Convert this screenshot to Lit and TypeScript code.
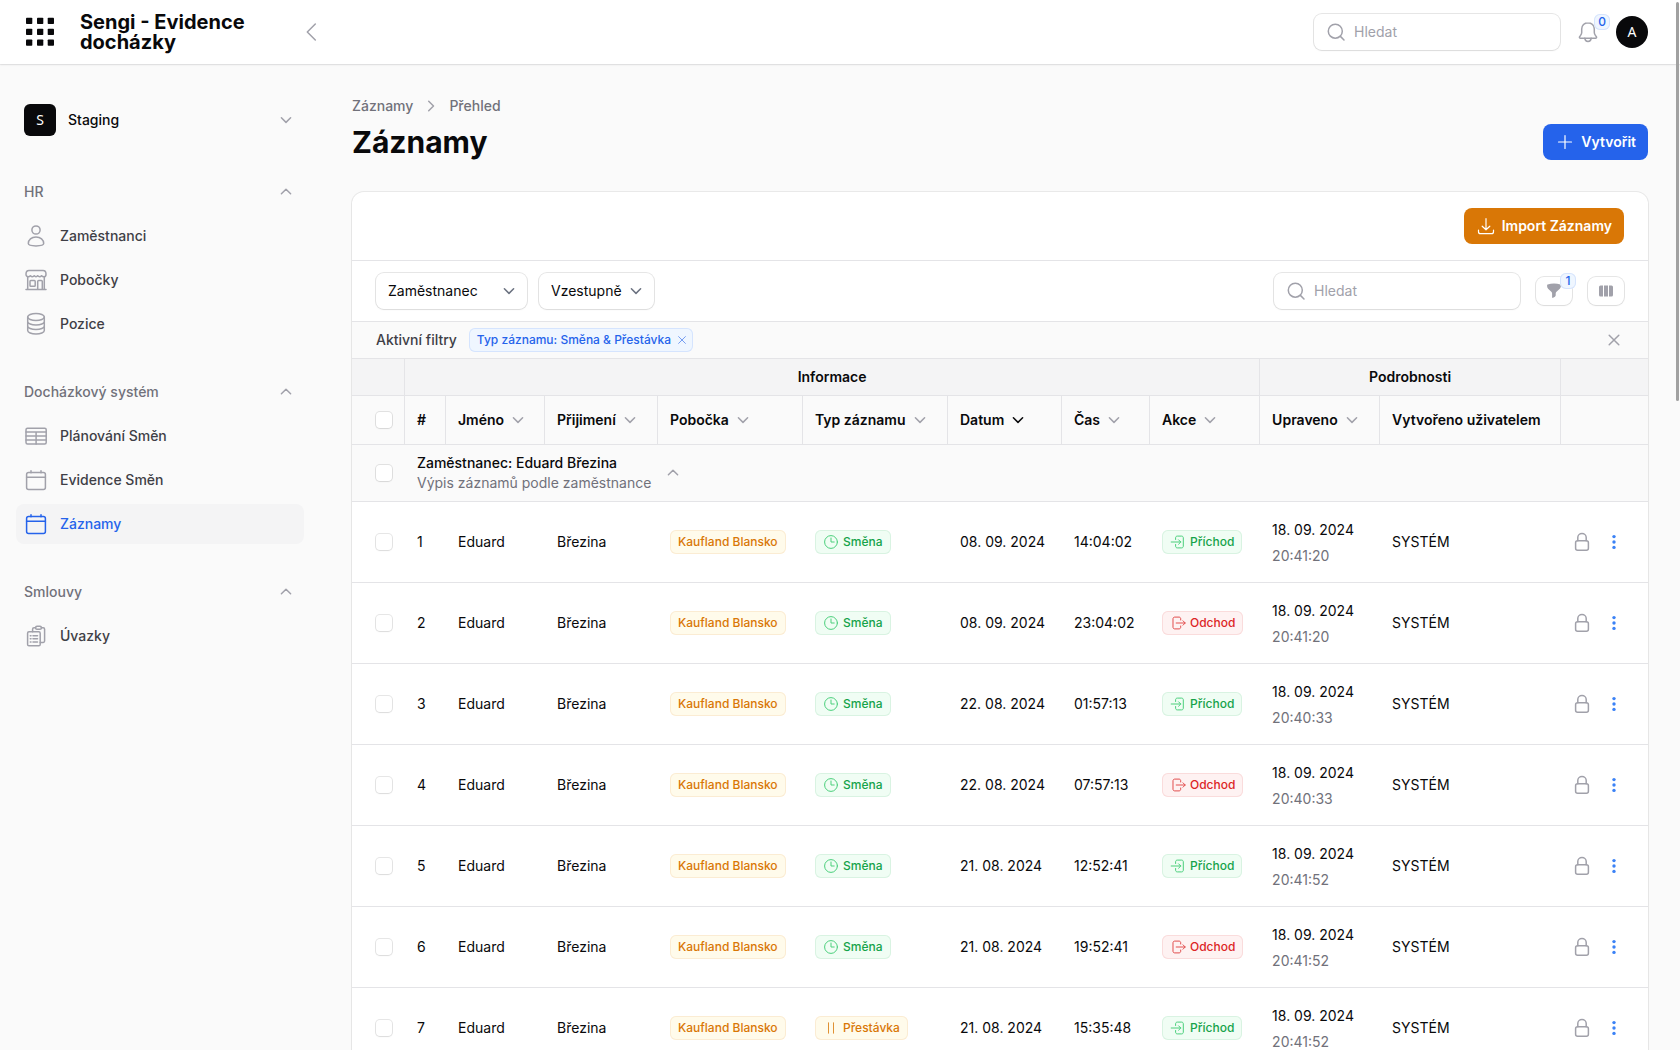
import { LitElement, html, svg, css, nothing, type SVGTemplateResult } from "lit";
import { customElement } from "lit/decorators.js";
import { classMap } from "lit/directives/class-map.js";

type IconDef = { box: number; art: SVGTemplateResult };

const calendar = svg`<rect x="2.6" y="4.6" width="18.8" height="16.8" rx="2"/><path d="M2.6 9.3h18.8M7 2.7v2M17 2.7v2"/>`;

const icons: Record<string, IconDef> = {
  apps: {
    box: 32,
    art: svg`${[2, 13, 23.7].map((y) => [2, 13, 23.7].map((x) => svg`<rect x=${x} y=${y - 0.2} width="6.3" height="6.3" rx="0.8" fill="currentColor" stroke="none"/>`))}`,
  },
  back: { box: 20, art: svg`<path d="M14.3 2 6.3 10l8 8"/>` },
  down: { box: 20, art: svg`<path d="m5.4 7.8 4.6 4.6 4.6-4.6"/>` },
  up: { box: 20, art: svg`<path d="M5.4 11.8 10 7.2l4.6 4.6"/>` },
  right: { box: 20, art: svg`<path d="m7.7 5.2 4.8 4.8-4.8 4.8"/>` },
  person: { box: 24, art: svg`<circle cx="12" cy="6" r="4.1"/><path d="M12 13c-4.500 0-7.700 2.800-7.700 6.600 0 1.600 3.400 2.300 7.700 2.300s7.700-.7 7.700-2.300c0-3.800-3.200-6.600-7.700-6.600z"/>` },
  store: { box: 24, art: svg`<path d="M5 2.600h14c1.800 0 3 1.600 3 3.600 0 1.600-.8 2.600-2.200 2.600-1 0-1.700-.5-2.200-1.100-.5.6-1.200 1.100-2 1.100s-1.500-.5-1.900-1.100c-.4.6-1 1.100-1.700 1.100s-1.300-.5-1.700-1.100c-.4.6-1.100 1.100-1.900 1.100s-1.500-.5-2-1.100c-.5.6-1.200 1.100-2.200 1.100C2.800 8.800 2 7.800 2 6.200c0-2 1.200-3.600 3-3.600z"/><path d="M3.700 9v12.500M20.300 9v12.500M2 21.500h20M13.700 21.500V13.600c0-.6.4-1 1-1h2.600c.6 0 1 .4 1 1v7.900"/><rect x="6" y="12.600" width="5.200" height="5.600" rx=".8"/>` },
  stack: { box: 24, art: svg`<ellipse cx="12" cy="5" rx="8.300" ry="3.500"/><path d="M3.700 5v13.400c0 2 3.700 3.600 8.300 3.600s8.300-1.600 8.300-3.600V5M3.700 9.400c0 2 3.700 3.600 8.300 3.600s8.300-1.600 8.300-3.600M3.700 13.900c0 2 3.700 3.600 8.300 3.600s8.300-1.600 8.300-3.600"/>` },
  table: { box: 24, art: svg`<rect x="2" y="4.200" width="20.200" height="15.800" rx="1.500"/><path d="M2 7.900h20.200M2 11.900h20.200M2 15.900h20.200M12.100 7.900V20"/>` },
  calendar: { box: 24, art: calendar },
  clipboard: { box: 24, art: svg`<rect x="3.600" y="7.800" width="12.600" height="14" rx="1.400"/><path d="M8.600 7.800V5.200c0-.8.6-1.400 1.400-1.400h1.600M17.400 3.800h1.800c.8 0 1.400.6 1.400 1.400V17c0 .8-.6 1.400-1.400 1.400h-3"/><rect x="11.600" y="2.300" width="5.800" height="3" rx="1.400"/><path d="M6.300 11.700h.7M9 11.700h4.500M6.300 14.800h.7M9 14.800h4.500M6.300 17.900h.7M9 17.900h4.500"/>` },
  search: { box: 20, art: svg`<circle cx="9.300" cy="9.200" r="7"/><path d="m14.400 14.400 3.600 3.600"/>` },
  bell: { box: 24, art: svg`<path d="M12 2.700c-3.600 0-6.300 2.600-6.300 6.200v3.600c0 1-.4 1.900-1.100 2.900l-1 1.300c-.5.7 0 1.500.8 1.500h15.200c.8 0 1.300-.8.8-1.500l-1-1.300c-.7-1-1.100-1.900-1.100-2.900V8.900c0-3.600-2.700-6.200-6.300-6.200z"/><path d="M8.800 18.200c.2 1.900 1.500 3.200 3.200 3.200s3-1.300 3.200-3.200"/>` },
  plus: { box: 20, art: svg`<path d="M10 3.500v13M3.500 10h13"/>` },
  download: { box: 20, art: svg`<path d="M2.500 14v1.700c0 1.200.8 2 2 2h11c1.200 0 2-.8 2-2V14M10 2.700v11M6.200 10.200 10 13.800l3.800-3.600"/>` },
  funnel: { box: 20, art: svg`<path d="M3.600 3.500c2-.6 4.200-.9 6.400-.9s4.400.3 6.400.9c.3.100.5.400.5.800v1c0 1-.4 1.800-1.100 2.500l-3.300 3c-.5.5-.8 1.100-.8 1.800v1.700c0 .6-.3 1.100-.8 1.400l-1.800 1.100c-.5.3-1 0-1-.6v-3.600c0-.7-.3-1.300-.8-1.800l-3.200-3C3.400 7.100 3.100 6.300 3.100 5.300v-1c0-.4.2-.7.5-.8z" fill="currentColor" stroke="none"/>` },
  columns: { box: 20, art: svg`<path d="M4.500 4.500H7v11H4.500a1.500 1.500 0 0 1-1.500-1.500V6a1.500 1.500 0 0 1 1.500-1.500zM8 4.500h4v11H8zM13 4.500h2.500A1.500 1.500 0 0 1 17 6v8a1.500 1.500 0 0 1-1.500 1.500H13z" fill="currentColor" stroke="none"/>` },
  close: { box: 20, art: svg`<path d="m5.200 5.200 9.600 9.600M14.800 5.200l-9.600 9.600"/>` },
  remove: { box: 14, art: svg`<path d="m3.600 3.600 6.800 6.800M10.400 3.600l-6.800 6.800"/>` },
  clock: { box: 16, art: svg`<circle cx="8" cy="8" r="6.400"/><path d="M8 4v4h3.200"/>` },
  pause: { box: 16, art: svg`<path d="M5.500 2.800v10.400M10.500 2.800v10.400"/>` },
  enter: { box: 16, art: svg`<path d="M5.600 5.500V3.800c0-1 .7-1.700 1.700-1.700h4.300c1 0 1.700.7 1.700 1.700v8.400c0 1-.7 1.700-1.700 1.700H7.300c-1 0-1.700-.7-1.700-1.700v-1.700M1.200 8h9.600M8.600 5.800 10.800 8l-2.200 2.200"/>` },
  leave: { box: 16, art: svg`<path d="M10.700 5V3.800c0-1-.7-1.700-1.700-1.700H4.700c-1 0-1.700.7-1.700 1.700v8.400c0 1 .7 1.700 1.700 1.700H9c1 0 1.700-.7 1.700-1.700V11M6.200 8h9M13 5.800 15.200 8 13 10.200"/>` },
  lock: { box: 20, art: svg`<rect x="3.600" y="8.800" width="12.800" height="9.400" rx="2"/><path d="M5.800 8.800V5.500C5.800 3.300 7.600 1.500 10 1.500s4.200 1.800 4.200 4v3.300"/>` },
  dots: { box: 20, art: svg`${[4.6, 10, 15.400].map((y) => svg`<circle cx="10" cy=${y} r="1.700" fill="currentColor" stroke="none"/>`)}` },
};

const icon = (name: string, extra = "") => {
  const { box, art } = icons[name];
  return html`<svg class="icon ${extra}" width=${box} height=${box} viewBox="0 0 ${box} ${box}" aria-hidden="true">${art}</svg>`;
};

const navigation = [
  { label: "HR", items: [["person", "Zaměstnanci"], ["store", "Pobočky"], ["stack", "Pozice"]] },
  { label: "Docházkový systém", items: [["table", "Plánování Směn"], ["calendar", "Evidence Směn"], ["calendar", "Záznamy"]] },
  { label: "Smlouvy", items: [["clipboard", "Úvazky"]] },
];
const currentPage = "Záznamy";

const columns = [
  { label: "#" },
  { label: "Jméno", sortable: true },
  { label: "Přijimení", sortable: true },
  { label: "Pobočka", sortable: true },
  { label: "Typ záznamu", sortable: true },
  { label: "Datum", sortable: true, sorted: true },
  { label: "Čas", sortable: true },
  { label: "Akce", sortable: true },
  { label: "Upraveno", sortable: true },
  { label: "Vytvořeno uživatelem" },
];

type Entry = { kind: string; date: string; time: string; action: string; edited: string };
const entries: Entry[] = [
  { kind: "Směna", date: "08. 09. 2024", time: "14:04:02", action: "Příchod", edited: "20:41:20" },
  { kind: "Směna", date: "08. 09. 2024", time: "23:04:02", action: "Odchod", edited: "20:41:20" },
  { kind: "Směna", date: "22. 08. 2024", time: "01:57:13", action: "Příchod", edited: "20:40:33" },
  { kind: "Směna", date: "22. 08. 2024", time: "07:57:13", action: "Odchod", edited: "20:40:33" },
  { kind: "Směna", date: "21. 08. 2024", time: "12:52:41", action: "Příchod", edited: "20:41:52" },
  { kind: "Směna", date: "21. 08. 2024", time: "19:52:41", action: "Odchod", edited: "20:41:52" },
  { kind: "Přestávka", date: "21. 08. 2024", time: "15:35:48", action: "Příchod", edited: "20:41:52" },
];

const badgeLook: Record<string, { tone: string; icon?: string }> = {
  "Kaufland Blansko": { tone: "amber" },
  Směna: { tone: "green", icon: "clock" },
  Přestávka: { tone: "amber", icon: "pause" },
  Příchod: { tone: "green", icon: "enter" },
  Odchod: { tone: "red", icon: "leave" },
};

const badge = (text: string) => {
  const look = badgeLook[text];
  return html`<span class="badge ${look.tone}">${look.icon ? icon(look.icon) : nothing}${text}</span>`;
};

const searchBox = () => html`
  <label class="search field">${icon("search")}<input type="search" placeholder="Hledat" aria-label="Hledat" /></label>
`;

@customElement("app-root")
export class AppRoot extends LitElement {
  static styles = css`
    :host {
      display: flex;
      flex-direction: column;
      height: 100vh;
      background: #fafafa;
      color: #09090b;
      font: 400 14px/20px Inter, "Liberation Sans", sans-serif;
    }
    *, *::before { box-sizing: border-box; }
    h1, p, ul { margin: 0; padding: 0; }
    ul { list-style: none; }
    a { color: inherit; text-decoration: none; }
    button, input, select { margin: 0; font: inherit; color: inherit; }
    button { display: inline-flex; align-items: center; justify-content: center; padding: 0; border: 0; background: none; cursor: pointer; }
    .icon { display: block; flex: none; fill: none; stroke: currentColor; stroke-width: 1.5; stroke-linecap: round; stroke-linejoin: round; }
    .chevron { color: #a1a1aa; }
    .muted { color: #a1a1aa; }

    .topbar { display: flex; align-items: center; flex: none; height: 64px; padding: 0 32px 0 24px; background: #fff; box-shadow: 0 0 0 1px rgba(9, 9, 11, 0.05), 0 1px 2px rgba(0, 0, 0, 0.08); z-index: 1; }
    .brand { display: flex; align-items: center; justify-content: space-between; width: 277px; }
    .logo { width: 172px; margin-right: auto; margin-left: 24px; font-size: 20px; font-weight: 700; line-height: 20px; }
    .tools { display: flex; align-items: center; gap: 16px; margin-left: auto; }
    .counted { position: relative; }
    .count { position: absolute; display: flex; align-items: center; justify-content: center; min-width: 16px; height: 16px; border-radius: 6px; background: #eff6ff; box-shadow: inset 0 0 0 1px #d6e4fd; color: #2563eb; font-size: 12px; font-weight: 500; line-height: 16px; }
    .bell .count { top: -6px; right: -10px; }
    .filter .count { top: -4px; right: -4px; }
    .avatar { width: 32px; height: 32px; flex: none; display: flex; align-items: center; justify-content: center; background: #09090b; color: #fff; font: 400 14px/20px "Noto Sans", sans-serif; }
    .round { border-radius: 50%; }
    .square { border-radius: 6px; }

    .field { border-radius: 8px; background: #fff; box-shadow: 0 0 0 1px rgba(9, 9, 11, 0.1), 0 1px 2px rgba(0, 0, 0, 0.05); }
    .search { display: flex; align-items: center; gap: 8px; width: 246px; height: 36px; padding: 0 12px; color: #a1a1aa; }
    .search input { flex: 1; min-width: 0; padding: 0; border: 0; outline: 0; background: none; color: #09090b; appearance: none; }
    .search input::placeholder { color: #a1a1aa; opacity: 1; }

    .shell { display: flex; flex: 1; min-height: 0; }
    .sidebar { width: 320px; flex: none; padding: 32px 16px; overflow: hidden; }
    .tenant { display: flex; width: 100%; gap: 12px; padding: 8px; font-weight: 500; }
    .tenant .icon, .group-head .icon { margin-left: auto; }
    .groups { display: grid; gap: 28px; margin-top: 28px; }
    .group { display: grid; gap: 4px; }
    .group-head { width: 100%; height: 40px; padding: 0 8px; color: #71717a; font-weight: 500; }
    .items { display: grid; gap: 4px; }
    .item { display: flex; align-items: center; gap: 12px; height: 40px; padding: 0 8px; border-radius: 8px; color: #3f3f46; font-weight: 500; }
    .item .icon { color: #a1a1aa; }
    .item.active { background: #f4f4f5; }
    .item.active, .item.active .icon { color: #2563eb; }

    .main { flex: 1; min-width: 0; padding: 32px; overflow-y: auto; scrollbar-width: none; }
    .crumbs { display: flex; align-items: center; gap: 8px; margin-bottom: 8px; color: #71717a; font-weight: 500; }
    .heading { display: flex; align-items: center; justify-content: space-between; margin-bottom: 32px; }
    h1 { font-size: 30px; line-height: 36px; font-weight: 700; }
    .button { gap: 6px; height: 36px; padding: 0 12px; border-radius: 8px; color: #fff; font-weight: 600; }
    .button .icon { stroke-width: 1.2; }
    .blue { background: #2563eb; }
    .orange { background: #d97706; }

    .card { border-radius: 12px; background: #fff; overflow: clip; box-shadow: 0 0 0 1px rgba(9, 9, 11, 0.07), 0 1px 2px rgba(0, 0, 0, 0.05); }
    .card-head { display: flex; justify-content: flex-end; padding: 16px 24px; }
    .toolbar { display: flex; align-items: center; gap: 16px; padding: 12px 24px; border-top: 1px solid #e4e4e7; }
    .selects { display: flex; gap: 12px; margin-right: auto; }
    .pick { display: grid; grid-template-columns: 1fr 28px; align-items: center; }
    .pick.wide { width: 151px; }
    .pick select { grid-area: 1 / 1 / 2 / 3; height: 36px; width: 100%; padding: 0 32px 0 12px; border: 0; border-radius: 8px; background: none; appearance: none; outline: 0; }
    .pick .icon { grid-area: 1 / 2; pointer-events: none; color: #6b7280; }
    .tool { width: 36px; height: 28px; color: #a1a1aa; }
    .active-filters { display: flex; align-items: center; gap: 12px; padding: 6px 24px; border-top: 1px solid #e4e4e7; background: #fafafa; color: #3f3f46; font-weight: 500; }
    .active-filters > button { margin-left: auto; color: #a1a1aa; }

    .badge { display: inline-flex; align-items: center; gap: 4px; height: 24px; padding: 0 8px; border-radius: 6px; font-size: 12px; font-weight: 500; line-height: 16px; vertical-align: middle; white-space: nowrap; }
    .badge .icon { stroke-width: 1; opacity: 0.8; }
    .badge.info { padding-right: 4px; color: #2563eb; background: #eff6ff; box-shadow: inset 0 0 0 1px #d5e4fe; }
    .badge.info .icon { opacity: 0.6; }
    .badge.amber { color: #d97706; background: #fffbeb; box-shadow: inset 0 0 0 1px #fbecd3; }
    .badge.green { color: #16a34a; background: #f0fdf4; box-shadow: inset 0 0 0 1px #d9f3e2; }
    .badge.green .icon { color: #22c55e; }
    .badge.red { color: #dc2626; background: #fef2f2; box-shadow: inset 0 0 0 1px #fadcdc; }

    table { width: 100%; border-collapse: separate; border-spacing: 0; table-layout: fixed; }
    col:nth-child(1) { width: 52px; }
    col:nth-child(2) { width: 41px; }
    col:nth-child(3) { width: 99px; }
    col:nth-child(4) { width: 113px; }
    col:nth-child(5), col:nth-child(6) { width: 145px; }
    col:nth-child(7) { width: 114px; }
    col:nth-child(8) { width: 88px; }
    col:nth-child(9) { width: 110px; }
    col:nth-child(10) { width: 120px; }
    col:nth-child(11) { width: 181px; }
    col:nth-child(12) { width: 88px; }
    th, td { padding: 0 12px; border-top: 1px solid #e4e4e7; text-align: left; white-space: nowrap; }
    th { font-weight: 600; }
    th + th { border-left: 1px solid #e4e4e7; }
    .bands th, .bands td { height: 37px; background: #f4f4f5; text-align: center; }
    .bands td:last-child, .labels td:last-child { border-left: 1px solid #e4e4e7; }
    .bands td + th { border-left: 1px solid #e4e4e7; }
    .labels th, .labels td { height: 49px; background: #fafafa; }
    .labels td + th { border-left: 1px solid #e4e4e7; }
    .labels button { gap: 4px; font-weight: 600; }
    .sorted .chevron { color: #09090b; }
    .person td { height: 57px; background: #fafafa; }
    .person td + td, .entry td + td { padding-left: 13px; }
    .person-line { display: flex; align-items: center; gap: 12px; }
    .person strong { font-weight: 500; }
    .soft { color: #71717a; }
    .entry td { height: 81px; }
    .edited { line-height: 24px; }
    .edited-time { margin-top: 4px; color: #71717a; }
    tr > td:first-child { padding-left: 24px; }
    .entry td:last-child { padding-left: 12px; }
    .actions { display: flex; align-items: center; gap: 12px; color: #a1a1aa; }
    .actions button:last-child { color: #3b82f6; }
    input[type="checkbox"] { display: block; width: 16px; height: 16px; appearance: none; border-radius: 4px; background: #fff; box-shadow: 0 0 0 1px rgba(9, 9, 11, 0.1), 0 1px 2px rgba(0, 0, 0, 0.05); }

    .scroll-thumb { position: fixed; top: 2px; right: 1px; width: 3px; height: 38vh; border-radius: 2px; background: #a1a1a1; z-index: 2; }
  `;

  private renderSidebar() {
    return html`
      <nav class="sidebar">
        <button class="tenant"><span class="avatar square">S</span>Staging${icon("down", "chevron")}</button>
        <div class="groups">
          ${navigation.map((group) => html`
            <section class="group">
              <button class="group-head">${group.label}${icon("up", "chevron")}</button>
              <ul class="items">
                ${group.items.map(([glyph, label]) => html`
                  <li><a href="#" class=${classMap({ item: true, active: label === currentPage })}>${icon(glyph)}${label}</a></li>
                `)}
              </ul>
            </section>
          `)}
        </div>
      </nav>
    `;
  }

  private renderEntry(entry: Entry, index: number) {
    return html`
      <tr class="entry">
        <td><input type="checkbox" aria-label="Vybrat ${index + 1}" /></td>
        <td>${index + 1}</td>
        <td>Eduard</td>
        <td>Březina</td>
        <td>${badge("Kaufland Blansko")}</td>
        <td>${badge(entry.kind)}</td>
        <td>${entry.date}</td>
        <td>${entry.time}</td>
        <td>${badge(entry.action)}</td>
        <td><p class="edited">18. 09. 2024</p><p class="edited-time">${entry.edited}</p></td>
        <td>SYSTÉM</td>
        <td>
          <div class="actions">
            <button aria-label="Zamknout">${icon("lock")}</button>
            <button aria-label="Akce">${icon("dots")}</button>
          </div>
        </td>
      </tr>
    `;
  }

  private renderTable() {
    return html`
      <table>
        <colgroup>${Array.from({ length: 12 }, () => html`<col />`)}</colgroup>
        <thead>
          <tr class="bands">
            <td></td>
            <th colspan="8" scope="colgroup">Informace</th>
            <th colspan="2" scope="colgroup">Podrobnosti</th>
            <td></td>
          </tr>
          <tr class="labels">
            <td><input type="checkbox" aria-label="Vybrat vše" /></td>
            ${columns.map((column) => html`
              <th scope="col" class=${classMap({ sorted: !!column.sorted })}>
                ${column.sortable ? html`<button>${column.label}${icon("down", "chevron")}</button>` : column.label}
              </th>
            `)}
            <td></td>
          </tr>
        </thead>
        <tbody>
          <tr class="person">
            <td><input type="checkbox" aria-label="Vybrat skupinu" /></td>
            <td colspan="11">
              <div class="person-line">
                <div><strong>Zaměstnanec: Eduard Březina</strong><p class="soft">Výpis záznamů podle zaměstnance</p></div>
                <button aria-label="Sbalit">${icon("up", "chevron")}</button>
              </div>
            </td>
          </tr>
          ${entries.map((entry, index) => this.renderEntry(entry, index))}
        </tbody>
      </table>
    `;
  }

  render() {
    return html`
      <header class="topbar">
        <div class="brand">
          <button aria-label="Aplikace">${icon("apps")}</button>
          <a href="#" class="logo">Sengi - Evidence docházky</a>
        </div>
        <button class="muted" aria-label="Sbalit menu">${icon("back")}</button>
        <div class="tools">
          ${searchBox()}
          <button class="counted bell muted" aria-label="Oznámení">${icon("bell")}<span class="count">0</span></button>
          <button class="avatar round" aria-label="Účet">A</button>
        </div>
      </header>
      <div class="shell">
        ${this.renderSidebar()}
        <main class="main">
          <div class="crumbs"><a href="#">Záznamy</a>${icon("right", "chevron")}<a href="#">Přehled</a></div>
          <div class="heading">
            <h1>Záznamy</h1>
            <button class="button blue">${icon("plus")}Vytvořit</button>
          </div>
          <section class="card">
            <div class="card-head"><button class="button orange">${icon("download")}Import Záznamy</button></div>
            <div class="toolbar">
              <div class="selects">
                <div class="pick field wide"><select aria-label="Seskupit podle"><option>Zaměstnanec</option></select>${icon("down")}</div>
                <div class="pick field"><select aria-label="Směr seskupení"><option>Vzestupně</option></select>${icon("down")}</div>
              </div>
              ${searchBox()}
              <button class="tool field counted filter" aria-label="Filtr">${icon("funnel")}<span class="count">1</span></button>
              <button class="tool field" aria-label="Sloupce">${icon("columns")}</button>
            </div>
            <div class="active-filters">
              Aktivní filtry
              <span class="badge info">Typ záznamu: Směna &amp; Přestávka<button aria-label="Odebrat filtr">${icon("remove")}</button></span>
              <button aria-label="Odebrat všechny filtry">${icon("close")}</button>
            </div>
            ${this.renderTable()}
          </section>
        </main>
      </div>
      <div class="scroll-thumb"></div>
    `;
  }
}
